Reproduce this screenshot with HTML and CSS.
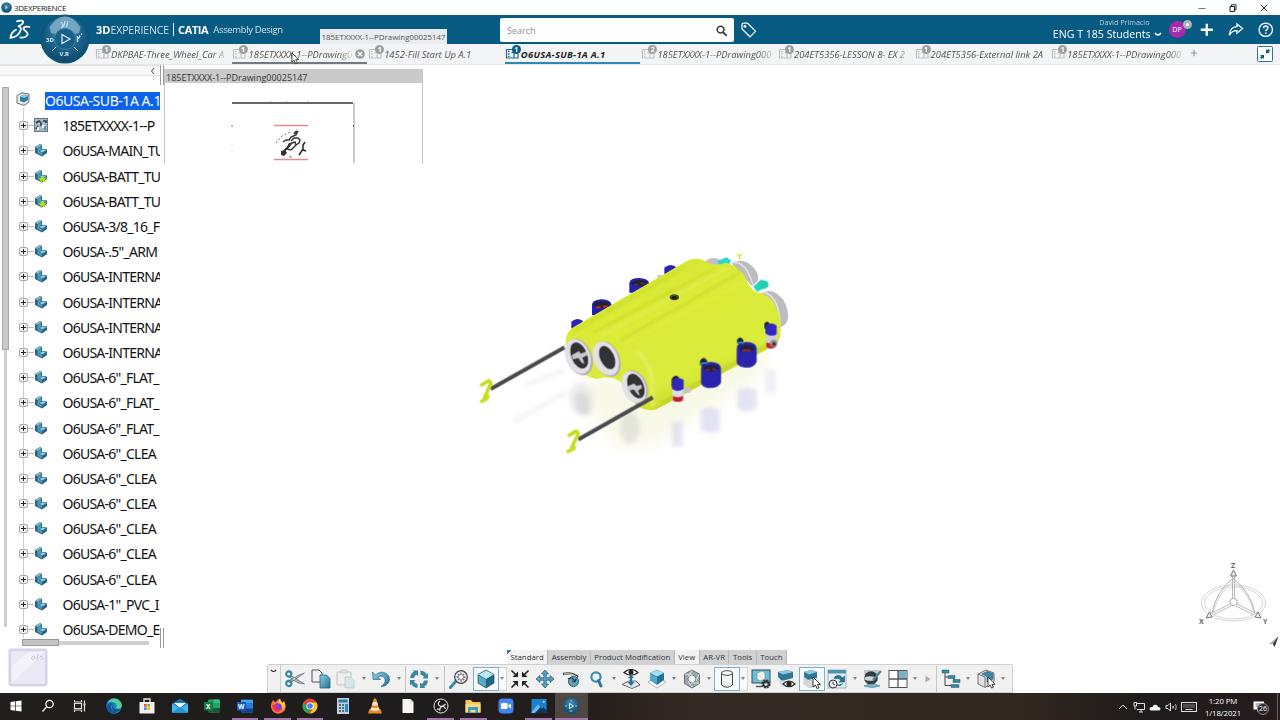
FILE: index.html
```
<!DOCTYPE html>
<html lang="en">

<head>
    <meta charset="UTF-8">
    <meta name="viewport" content="width=device-width, initial-scale=1.0">
    <title>3DEXPERIENCE</title>
    <link rel="stylesheet" href="styles.css">
</head>

<body>
    <!-- shared icons -->
    <svg class="defs" width="0" height="0">
        <defs>
            <linearGradient id="blueGrad" x1="0" y1="0" x2="1" y2="1">
                <stop offset="0" stop-color="#8fd0e6" />
                <stop offset="1" stop-color="#246f92" />
            </linearGradient>
            <linearGradient id="shell" x1="0" y1="0" x2="0.6" y2="1">
                <stop offset="0" stop-color="#d3e42e" />
                <stop offset="0.45" stop-color="#dbeb38" />
                <stop offset="0.8" stop-color="#dbeb3a" />
                <stop offset="1" stop-color="#c3d42a" />
            </linearGradient>
            <radialGradient id="ball" cx="0.5" cy="0.35" r="0.7">
                <stop offset="0" stop-color="#4a8fb4" />
                <stop offset="0.6" stop-color="#1a5f87" />
                <stop offset="1" stop-color="#0c4566" />
            </radialGradient>
            <filter id="soft" x="-30%" y="-30%" width="160%" height="160%">
                <feGaussianBlur stdDeviation="7" />
            </filter>
            <filter id="softer" x="-30%" y="-30%" width="160%" height="160%">
                <feGaussianBlur stdDeviation="22" />
            </filter>
            <filter id="shine" x="-30%" y="-30%" width="160%" height="160%">
                <feGaussianBlur stdDeviation="3" />
            </filter>
        </defs>
        <symbol id="part" viewBox="0 0 14 14">
            <path d="M1 4 L6 1 L8 2 L8 6 L13 6.5 L13 10 L8 13.5 L1 10Z" fill="#28647f" />
            <path d="M1.5 4.3 L6 1.5 L7.5 2.3 L3.3 5Z" fill="#8cc8de" />
            <path d="M3.5 5.4 L7.2 3 L7.2 6.5 L4.8 8.2 L8 9.9 L8 12.6 L3.5 10Z" fill="#4d9cbb" />
            <path d="M5.6 8 L8.4 6.6 L12 7.3 L8.4 9.4Z" fill="#8cd0e6" />
        </symbol>
        <symbol id="star" viewBox="0 0 14 14">
            <path d="M8 6 L9 9 L13 8.5 L10.5 11 L12 13.5 L8.7 12 L6 14 L6.7 11.2 L4 9.5 L7.3 9Z" fill="#b8e010" />
        </symbol>
        <symbol id="cube" viewBox="0 0 20 20">
            <path d="M2 5.5 L10 1 L18 5.5 V14 L10 19 L2 14Z" fill="#226787" stroke="#1c4d63" stroke-width=".7" />
            <path d="M2.4 5.6 L10 1.4 L17.6 5.6 L10 10Z" fill="#bce8f5" />
            <path d="M2.4 6.2 L9.8 10.5 V18.2 L2.4 13.8Z" fill="#5ba8c5" />
        </symbol>
        <symbol id="tabicon" viewBox="0 0 18 14">
            <path d="M1.500 3.500 H9 V12 H1.500Z M8 12 H13 V8" fill="none" stroke="currentColor" stroke-width="1.2" />
            <path d="M3 5.500 H4.500 M3 8 H4.500 M3 10.300 H4.500 M6.500 6.500 H8" stroke="currentColor" stroke-width="1.3" />
        </symbol>
        <symbol id="cursor" viewBox="0 0 10 14">
            <path d="M1 0.8 V11 L3.4 8.9 L5.2 13 L7 12.2 L5.3 8.2 H8.6Z" fill="#fff" stroke="#222" stroke-width=".9" />
        </symbol>
    </svg>

    <div class="titlebar">
        <svg width="11" height="11" viewBox="0 0 11 11"><circle cx="5.5" cy="5.5" r="5.3" fill="url(#ball)" /><path d="M4.3 3.5 L7 5.5 L4.3 7.5Z" fill="#9cc8de" /></svg>
        <span class="app-name">3DEXPERIENCE</span>
        <div class="window-buttons">
            <svg viewBox="0 0 10 10"><path d="M1.5 5.5 H8.5" stroke="#777" /></svg>
            <svg viewBox="0 0 10 10"><path d="M2 3.5 H6.5 V8.5 H2Z M3.5 3.5 V1.8 H8 V6.8 H6.5" fill="none" stroke="#222" /></svg>
            <svg viewBox="0 0 10 10"><path d="M2 2 L8 8 M8 2 L2 8" stroke="#222" /></svg>
        </div>
    </div>

    <header class="topbar">
        <svg class="ds-logo" viewBox="0 0 22 22" fill="none" stroke="#fff" stroke-width="1.8" stroke-linecap="round">
            <path d="M8 2.300 C11 1.200 15 1.200 14 3.800 C13.300 5.600 11 6.700 9 7.300 C12.500 7.600 12.500 10 10.800 13.200 C8.800 16.800 4.500 18.600 1.500 18.800 C1.800 15.500 3.500 12.500 7 10.800" />
            <path d="M20.300 8 C17.500 7.200 14.300 8 14.500 9.800 C14.800 11.600 19 12.600 18.700 15.200 C18.400 17.800 14.500 19 11.300 18.400" />
        </svg>
        <svg class="compass" viewBox="0 0 52 52">
            <circle cx="26" cy="26" r="24.500" fill="#0a5578" />
            <circle cx="26" cy="26" r="22.500" fill="url(#ball)" />
            <path d="M10.500 14 Q18 3 26 3.500 Q34 3 41.500 14 L40 20 L35 21 A10.500 10.500 0 0 0 17 21 L12 20Z" fill="#8ab7d0" opacity=".75" />
            <circle cx="26" cy="26" r="10.500" fill="#155f88" stroke="#3b7fa2" />
            <path d="M23 21.500 L31 26 L23 30.500Z" fill="none" stroke="#e6f2f8" stroke-width="1.200" />
            <path d="M22 9 L24 12 L22.500 15 M26 8 L24.500 14 M29 8 L27.500 14 M13 38 L17 34 M39 38 L35 34" stroke="#d9e9f1" fill="none" />
            <path d="M38.500 23 V29 M41 22.500 L39.500 26 M42.500 20.500 V22" stroke="#d9e9f1" fill="none" stroke-width="1.300" />
            <text x="7" y="28.500" class="compass-text">3D</text>
            <text x="20.500" y="42.500" class="compass-text">V.R</text>
        </svg>
        <div class="brand"><b>3D</b><span class="exp">EXPERIENCE</span><i></i><b class="catia">CATIA</b><span class="app">Assembly Design</span></div>
        <div class="search">
            <span>Search</span>
            <svg viewBox="0 0 12 12"><circle cx="5" cy="5" r="3.7" fill="none" stroke="#333c44" stroke-width="1.7" /><path d="M7.8 7.8 L11 11" stroke="#333c44" stroke-width="2" stroke-linecap="round" /></svg>
        </div>
        <svg class="tag" viewBox="0 0 16 16" fill="none" stroke="#fff" stroke-width="1.2"><path d="M1 2.5 Q1 1.2 2.3 1.2 H6.5 L14.5 9.3 L9 14.8 L1 7Z" /><circle cx="4" cy="4.2" r=".9" /></svg>
        <div class="user">
            <span class="user-name">David Primacio</span>
            <span class="space">ENG T 185 Students <svg width="8" height="5" viewBox="0 0 8 5"><path d="M1 1 Q2.5 3 4 3 Q5.5 3 7 1" fill="none" stroke="#fff" stroke-width="1.4" /></svg></span>
        </div>
        <div class="avatar">DP<em></em></div>
        <div class="top-actions">
            <svg viewBox="0 0 16 16"><path d="M8 1.8 V14.2 M1.8 8 H14.2" stroke="#fff" stroke-width="2.4" /></svg>
            <svg viewBox="0 0 16 16"><path d="M9.3 2 L15 6.8 L9.3 11.5 V8.8 C5.5 8.7 3.4 10 1.3 13.6 C1.8 8.3 4.5 5 9.3 4.8Z" fill="none" stroke="#fff" stroke-width="1.3" /></svg>
            <svg viewBox="0 0 16 16"><circle cx="8" cy="8" r="6.9" fill="none" stroke="#fff" stroke-width="1.3" /><path d="M5.8 6.3 C5.9 3.4 10.2 3.5 10.2 6 C10.2 7.6 8 7.7 8 9.5 M8 10.9 V12.3" fill="none" stroke="#fff" stroke-width="1.5" /></svg>
        </div>
        <div class="tooltip">185ETXXXX-1--PDrawing00025147</div>
    </header>

    <nav class="tabs">
        <div class="tab"><svg class="tab-icon"><use href="#tabicon" /></svg><em>1</em><span class="fade">DKPBAE-Three_Wheel_Car A</span></div>
        <div class="tab hover"><svg class="tab-icon"><use href="#tabicon" /></svg><em>1</em><span class="fade short">185ETXXXX-1--PDrawing0</span><svg class="close" viewBox="0 0 10 10"><circle cx="5" cy="5" r="4.8" fill="#9a9fa2" /><path d="M3 3 L7 7 M7 3 L3 7" stroke="#fff" stroke-width="1.3" /></svg></div>
        <div class="tab"><svg class="tab-icon"><use href="#tabicon" /></svg><em>1</em><span>1452-Fill Start Up A.1</span></div>
        <div class="tab active"><svg class="tab-icon"><use href="#tabicon" /></svg><em>1</em><span>O6USA-SUB-1A A.1</span></div>
        <div class="tab"><svg class="tab-icon"><use href="#tabicon" /></svg><em>2</em><span class="fade">185ETXXXX-1--PDrawing000</span></div>
        <div class="tab"><svg class="tab-icon"><use href="#tabicon" /></svg><em>1</em><span class="fade">204ET5356-LESSON 8- EX 2</span></div>
        <div class="tab"><svg class="tab-icon"><use href="#tabicon" /></svg><em>1</em><span>204ET5356-External link 2A</span></div>
        <div class="tab"><svg class="tab-icon"><use href="#tabicon" /></svg><em>1</em><span class="fade">185ETXXXX-1--PDrawing000</span></div>
        <svg class="add" viewBox="0 0 8 8"><path d="M4 .8 V7.2 M.8 4 H7.2" stroke="#9a9a9a" stroke-width="1.2" /></svg>
        <svg class="collapse" viewBox="0 0 16 16"><rect x=".5" y=".5" width="15" height="15" rx="1" fill="#fff" stroke="#2a7399" /><path d="M9 3 V7 H13 L11.7 5.7 L13 4.3 L11.7 3 L10.3 4.3Z M7 13 V9 H3 L4.3 10.3 L3 11.7 L4.3 13 L5.7 11.7Z" fill="#0b5a80" /></svg>
        <svg class="mouse"><use href="#cursor" /></svg>
    </nav>

    <main class="workspace">
        <aside class="side">
            <div class="side-head"><svg width="5" height="8" viewBox="0 0 5 8"><path d="M4 1 L1.5 4 L4 7" fill="none" stroke="#444" /></svg></div>
            <div class="tree-wrap">
                <div class="vscroll"><i></i></div>
                <ul class="tree">
                    <li class="root"><svg class="root-icon" viewBox="0 0 14 14"><path d="M1 3.5 L6 .8 L13 2 V10 L8 13.5 L1 11Z" fill="#e5eaec" stroke="#667078" /><path d="M4 4.5 L8 2.5 L12 3.7 V8 L8 10.5 L4 9Z" fill="#2d7d9f" /><path d="M4 4.5 L8 2.8 L12 3.9 L8.2 5.8Z" fill="#8cd0e6" /></svg><span>O6USA-SUB-1A A.1</span></li>
                    <li><i></i><svg viewBox="0 0 14 14"><rect x=".5" y=".5" width="13" height="13" fill="#a9b9c0" stroke="#647883" /><path d="M2 5 L5 3 L7 5 V8 M9 3 H12 V5 M2 11 L4 8" fill="none" stroke="#24404e" stroke-width="1.600" /><path d="M3 9 H5 V12 H3Z M8 7 H11 V10 H8Z M5 5 H6 V6 H5Z" fill="#f4f8fa" /><path d="M11 8 V12" stroke="#2f7f9f" stroke-width="1.500" /></svg><span>185ETXXXX-1--P</span></li>
                    <li><i></i><svg><use href="#part" /></svg><span>O6USA-MAIN_TU</span></li>
                    <li><i></i><svg><use href="#part" /><use href="#star" /></svg><span>O6USA-BATT_TU</span></li>
                    <li><i></i><svg><use href="#part" /><use href="#star" /></svg><span>O6USA-BATT_TU</span></li>
                    <li><i></i><svg><use href="#part" /></svg><span>O6USA-3/8_16_F</span></li>
                    <li><i></i><svg><use href="#part" /></svg><span>O6USA-.5"_ARM</span></li>
                    <li><i></i><svg><use href="#part" /></svg><span>O6USA-INTERNA</span></li>
                    <li><i></i><svg><use href="#part" /></svg><span>O6USA-INTERNA</span></li>
                    <li><i></i><svg><use href="#part" /></svg><span>O6USA-INTERNA</span></li>
                    <li><i></i><svg><use href="#part" /></svg><span>O6USA-INTERNA</span></li>
                    <li><i></i><svg><use href="#part" /></svg><span>O6USA-6"_FLAT_</span></li>
                    <li><i></i><svg><use href="#part" /></svg><span>O6USA-6"_FLAT_</span></li>
                    <li><i></i><svg><use href="#part" /></svg><span>O6USA-6"_FLAT_</span></li>
                    <li><i></i><svg><use href="#part" /></svg><span>O6USA-6"_CLEA</span></li>
                    <li><i></i><svg><use href="#part" /></svg><span>O6USA-6"_CLEA</span></li>
                    <li><i></i><svg><use href="#part" /></svg><span>O6USA-6"_CLEA</span></li>
                    <li><i></i><svg><use href="#part" /></svg><span>O6USA-6"_CLEA</span></li>
                    <li><i></i><svg><use href="#part" /></svg><span>O6USA-6"_CLEA</span></li>
                    <li><i></i><svg><use href="#part" /></svg><span>O6USA-6"_CLEA</span></li>
                    <li><i></i><svg><use href="#part" /></svg><span>O6USA-1"_PVC_I</span></li>
                    <li><i></i><svg><use href="#part" /></svg><span>O6USA-DEMO_E</span></li>
                </ul>
            </div>
            <div class="hscroll"><i></i></div>
            <b class="grip top"></b>
            <b class="grip bottom"></b>
            <svg class="stamp" viewBox="0 0 40 39"><rect x=".5" y=".5" width="39" height="38" rx="3" fill="#d6d2ea" /><rect x="3" y="3" width="34" height="33" rx="1" fill="#eae8f5" /><path d="M4 35 L4 18 L20 4 H36Z" fill="#f3f2fa" /><path d="M23 11 Q26 5 27 10 Q24 13 23 10 M30 6 L29 12 M32 8 Q36 9 33 12" fill="none" stroke="#c5c0dd" /></svg>
        </aside>

        <section class="canvas">
            <svg class="model" viewBox="0 0 990 690">
                <!-- floor reflections -->
                <path d="M320 420 L900 330 L880 400 L560 610 L440 620 Z" fill="#eceec0" opacity=".38" filter="url(#softer)" />
                <g filter="url(#soft)" opacity=".3">
                    <ellipse cx="335" cy="480" rx="38" ry="52" fill="#c9c9cf" transform="rotate(-15 335 480)" />
                    <ellipse cx="337" cy="490" rx="22" ry="36" fill="#8d8d94" transform="rotate(-15 337 490)" />
                    <ellipse cx="480" cy="565" rx="30" ry="48" fill="#bbbbc2" />
                    <path d="M692 510 Q722 495 750 510 V570 Q722 590 692 570Z" fill="#a5a5e0" />
                    <path d="M802 450 Q830 435 860 450 V505 Q830 525 802 505Z" fill="#a5a5e0" />
                    <rect x="606" y="545" width="32" height="75" fill="#b4b0da" />
                    <rect x="886" y="390" width="32" height="70" fill="#d0cde8" />
                    <path d="M170 435 L285 390 M130 545 L285 460" stroke="#c6c6cc" stroke-width="9" />
                </g>
                <!-- ports behind the shell -->
                <g>
                    <ellipse cx="730" cy="66" rx="22" ry="12" fill="#bfbfc5" />
                    <path d="M742 62 L770 52 L784 62 L775 75 L748 77Z" fill="#2dd8cc" />
                    <path d="M802 41 L808 49 L816 42 M809 49 V59" stroke="#d3e52d" stroke-width="4" fill="none" />
                    <path d="M785 70 Q820 50 850 82 Q870 105 862 124 L845 138Z" fill="#bdbdc1" />
                    <path d="M788 68 Q827 62 848 132" fill="none" stroke="#e3e3e5" stroke-width="4" />
                    <path d="M868 165 Q905 135 942 182 Q966 232 943 256 L920 268Z" fill="#bdbdc1" />
                    <path d="M876 156 Q928 163 930 258" fill="none" stroke="#e3e3e5" stroke-width="5" />
                    <path d="M562 105 H585 V88 H600 V112 L562 128Z" fill="#c9c9cc" />
                    <path d="M583 83 Q600 68 617 80 V105 H583Z" fill="#2a23b8" />
                    <path d="M304 245 Q320 230 338 242 V265 H304Z" fill="#2a23b8" />
                    <path d="M478 129 Q480 114 507 114 Q535 115 537 129 V158 H478Z" fill="#2420b0" />
                    <ellipse cx="508" cy="129" rx="23" ry="9" fill="#232133" />
                    <path d="M492 134 H504 M512 130 H524" stroke="#6b2a38" stroke-width="5" fill="none" />
                    <path d="M366 193 Q368 179 395 178 Q422 179 424 193 V225 H366Z" fill="#2420b0" />
                    <ellipse cx="395" cy="194" rx="23" ry="10" fill="#232133" />
                    <path d="M379 202 H392 M398 200 H414" stroke="#a53024" stroke-width="7" fill="none" />
                </g>
                <!-- shell -->
                <path d="M287 300 Q290 275 310 262 L650 63 Q678 50 705 62 L718 70 Q748 78 765 68 Q790 72 803 87 Q822 98 830 123 Q842 145 856 156 Q890 159 910 187 Q932 225 932 260 Q935 305 912 317 L560 508 Q530 517 500 496 L455 430 Q430 402 380 417 Q350 412 320 388 Q284 350 287 300Z" fill="url(#shell)" />
                <g filter="url(#shine)" fill="none">
                    <path d="M370 278 L735 84 M453 300 L817 94" stroke="#bccd25" stroke-width="5" opacity=".6" />
                    <path d="M390 290 L770 85" stroke="#e5f259" stroke-width="9" opacity=".6" />
                    <path d="M466 310 L830 120" stroke="#e7f35a" stroke-width="5" opacity=".5" />
                    <path d="M500 330 Q550 386 547 440 L548 500" stroke="#e9f475" stroke-width="14" opacity=".5" />
                    <path d="M310 275 L650 78" stroke="#c9da2a" stroke-width="10" opacity=".6" />
                    <path d="M575 490 L905 308" stroke="#b8c928" stroke-width="10" opacity=".6" />
                </g>
                <ellipse cx="613" cy="172" rx="14" ry="9" fill="#4c5020" />
                <ellipse cx="613" cy="173" rx="9" ry="5" fill="#1e2118" />
                <!-- front tubes -->
                <g transform="rotate(-22 327 350)"><ellipse cx="327" cy="351" rx="38" ry="57" fill="#b0b0b4" /><ellipse cx="324" cy="348" rx="36" ry="54" fill="#e2e2e6" /><ellipse cx="329" cy="347" rx="24" ry="41" fill="#303234" /></g>
                <path d="M305 345 L327 333 L332 341 L350 334 L354 345 L337 353 L344 372 L333 366 L326 354 L308 358Z" fill="#c8c8ca" />
                <g transform="rotate(-24 409 357)"><ellipse cx="411" cy="358" rx="37" ry="56" fill="#b0b0b4" /><ellipse cx="408" cy="355" rx="36" ry="53" fill="#e2e2e6" /><ellipse cx="413" cy="354" rx="21" ry="37" fill="#303234" /></g>
                <g transform="rotate(-24 493 440)"><ellipse cx="495" cy="441" rx="36" ry="52" fill="#b0b0b4" /><ellipse cx="492" cy="440" rx="34" ry="50" fill="#e2e2e6" /><ellipse cx="498" cy="440" rx="23" ry="39" fill="#303234" /></g>
                <path d="M472 439 L492 430 L500 438 L514 434 L516 444 L504 452 L510 468 L501 462 L492 449 L475 452Z" fill="#c8c8ca" />
                <!-- arms -->
                <path d="M62 447 L283 322 M325 598 L548 472" stroke="#46474b" stroke-width="12" />
                <path d="M62 443 L283 318 M325 594 L546 469" stroke="#66676b" stroke-width="2" />
                <path d="M31 437 L56 422 L63 429 L43 474 L58 467 M31 486 L54 474" stroke="#c8dc24" stroke-width="11" fill="none" stroke-linejoin="round" />
                <path d="M294 588 L318 573 L325 580 L305 623 L316 617 M290 636 L316 623" stroke="#c8dc24" stroke-width="11" fill="none" stroke-linejoin="round" />
                <!-- right side thrusters -->
                <path d="M690 376 V362 Q700 346 711 361 V377Z M801 310 V300 Q810 284 820 300 V315Z M883 265 V251 Q890 240 899 250 V268Z M605 440 V417 Q615 400 628 413Z" fill="#20213d" />
                <path d="M693 385 Q693 367 722 366 Q752 367 753 385 V428 Q745 444 722 444 Q699 444 693 430Z" fill="#2a24ac" />
                <ellipse cx="723" cy="385" rx="23" ry="10" fill="#22203d" />
                <path d="M708 390 H720 M728 385 L738 392" stroke="#7a2b42" stroke-width="6" fill="none" />
                <path d="M800 325 Q800 307 829 306 Q859 307 860 325 V365 Q853 383 829 383 Q804 382 800 368Z" fill="#2a24ac" />
                <ellipse cx="830" cy="325" rx="23" ry="10" fill="#22203d" />
                <path d="M817 331 H842" stroke="#8c3036" stroke-width="6" fill="none" />
                <path d="M690 374 Q700 365 711 370 M800 311 Q810 303 820 310" stroke="#34bac5" stroke-width="4" fill="none" />
                <path d="M636 443 L662 443 V458 L636 460Z" fill="#c5c5ca" />
                <path d="M606 437 H641 V475 H608Z" fill="#dedee2" /><path d="M605 422 Q622 406 641 420 V447 Q622 459 606 447Z" fill="#2f28bd" /><path d="M609 468 Q623 476 639 467 V481 Q622 491 609 481Z" fill="#c51d38" />
                <path d="M887 278 H921 V318 H889Z" fill="#ceced4" /><path d="M886 259 Q902 243 920 257 V283 Q903 292 886 280Z" fill="#2f28bd" /><path d="M889 307 Q902 313 918 303 V320 Q903 331 889 321Z" fill="#c51d38" />
                <circle cx="911" cy="309" r="11" fill="#99999c" /><circle cx="912" cy="312" r="6" fill="#3d3b38" />
                <path d="M849 140 L872 119 L894 125 L896 140 L875 148 L862 156Z" fill="#2ad7bd" /><circle cx="881" cy="134" r="13" fill="#22ccb3" />
            </svg>

            <div class="preview">
                <div class="preview-title">185ETXXXX-1--PDrawing00025147</div>
                <svg viewBox="0 0 256 80">
                    <path d="M67 20 H188" stroke="#333" stroke-width="1.3" />
                    <path d="M189 20 V80" stroke="#bbb" stroke-width="1.500" />
                    <path d="M67 42 V44 M188.500 42 V44 M106 18.500 V20 M122 18.500 V20 M143 18.500 V20" stroke="#666" />
                    <path d="M67 55 V72" stroke="#ddd" stroke-dasharray="1 5" />
                    <path d="M109 42.500 H143 M109 76.500 H143" stroke="#e08a98" stroke-width="1.600" />
                    <path d="M111 60 L117 53 L125 49" stroke="#777" stroke-dasharray="2 2" fill="none" />
                    <path d="M116 68 L120 67 L122 70 L119 73 L116 72Z" fill="#333" />
                    <path d="M122 66 L124 61 L130 59 L131 62 L126 67Z M118 59 L121 57 L124 57 L126 54 L131 52 L133 48 M126 58 L129 55 L133 55 L135 57 L134 60 L131 62" fill="none" stroke="#333" stroke-width="1.400" />
                    <path d="M119 68 L126 61 M129 51 L132 48" stroke="#333" stroke-width="2" />
                    <path d="M134 72 L138 66 L138 62 L140 59 M138 67 L141 68" fill="none" stroke="#222" stroke-width="1.500" />
                    <path d="M124 74 H127" stroke="#777" />
                </svg>
            </div>

            <svg class="triad" viewBox="0 0 74 68">
                <g fill="none" stroke="#c9c9c9" stroke-width=".8">
                    <ellipse cx="36.500" cy="42" rx="32" ry="18" /><ellipse cx="36.500" cy="42" rx="29" ry="16" />
                    <path d="M15 52 Q19 31 36 17 Q54 32 58 52" stroke="#999" />
                    <path d="M16.500 51 Q21 32 36.500 20 Q53 34 56.500 51" />
                    <path d="M35.500 38 V13 M37.500 38 V13 M33 43 L15 52 M34 45 L16 54 M40 43 L58 52 M39 45 L57 54" stroke="#aaa" />
                </g>
                <circle cx="36.500" cy="41" r="3.700" fill="#fff" stroke="#aaa" />
                <path d="M36.500 9 L39.500 15 H33.500Z M9 57 L15 56 L12.500 51Z M64 57 L58 56 L61 51Z" fill="#eee" stroke="#777" />
                <text x="34" y="7">Z</text><text x="2" y="63">X</text><text x="66" y="63">Y</text>
            </svg>
            <svg class="pointer" viewBox="0 0 10 12"><path d="M9.500 0 L0 8 L4 8 L5.500 11Z" fill="#aaa" /><path d="M9.500 0 L4 8 L5.500 11Z" fill="#333" /></svg>

            <div class="actionbar">
                <div class="sections">
                    <span class="on first">Standard</span><span>Assembly</span><span>Product Modification</span><span class="on">View</span><span>AR-VR</span><span>Tools</span><span>Touch</span>
                </div>
                <div class="tools">
                    <div class="handle"><svg width="7" height="5" viewBox="0 0 7 5"><path d="M1 1 Q3.500 4 6 1" fill="none" stroke="#333" stroke-width="1.200" /></svg></div>
                    <div class="tool"><svg viewBox="0 0 20 20"><path d="M5 6 L19.500 15 L13 14 L4 8Z M5 14 L19.500 4 L14 6 L3 12Z" fill="#a6b0b5" stroke="#59656c" stroke-width=".6" /><circle cx="3.800" cy="5" r="2.600" fill="none" stroke="#3387a8" stroke-width="2.100" /><circle cx="3.800" cy="14.500" r="2.600" fill="none" stroke="#3387a8" stroke-width="2.100" /></svg></div>
                    <div class="tool"><svg viewBox="0 0 20 20"><path d="M1 1 H8 L11 4 V13 H1Z" fill="#eef1f2" stroke="#444" stroke-width=".9" /><path d="M9 6 H15.500 L19 9.500 V19 H9Z" fill="url(#blueGrad)" stroke="#22627f" stroke-width=".8" /></svg></div>
                    <div class="tool"><svg viewBox="0 0 20 20" opacity=".65"><path d="M1 3 H15 V16 H1Z" fill="#eee" stroke="#aaa" /><rect x="5" y="1" width="6" height="3" fill="#ddd" stroke="#aaa" stroke-width=".7" /><path d="M9 8 H15 L18 11 V19 H9Z" fill="#cde0e7" stroke="#9ab4be" stroke-width=".8" /></svg></div>
                    <i class="caret"></i>
                    <div class="tool"><svg viewBox="0 0 20 20"><path d="M1.500 3 L2 10.500 L9.500 10.500 L6.800 8.300 C11 5.500 15 8.500 14 12.500 C13.500 14.500 12 16 10 17.500 C15 17.500 18.500 14 18.500 10 C18.500 4 10 .5 4.500 6Z" fill="url(#blueGrad)" stroke="#2b6d88" stroke-width=".7" /></svg></div>
                    <i class="caret"></i>
                    <i class="sep"></i>
                    <div class="tool"><svg viewBox="0 0 20 20" fill="#3b86a3"><path d="M1 9 Q1.500 4.500 5 2.500 L3.500 1.500 H9 V7 L7.500 5.500 Q5.500 6.500 5 9Z M11.500 1.500 Q16 2 17.700 5.500 L19 4 V9.500 H13.500 L15 8 Q14 6 11.500 5.500Z M19 11.500 Q18.500 16 15 17.700 L16.500 19 H11 V13.500 L12.500 15 Q14.500 14 15 11.500Z M8.500 19 Q4 18.500 2.300 15 L1 16.500 V11 H6.500 L5 12.500 Q6 14.500 8.500 15Z" /></svg></div>
                    <i class="caret"></i>
                    <i class="sep wide"></i>
                    <div class="tool"><svg viewBox="0 0 20 20"><path d="M1.500 18.500 L7 12" stroke="#3e87a3" stroke-width="3" stroke-linecap="round" /><circle cx="12" cy="8" r="6.300" fill="#e8eaeb" stroke="#444" stroke-width="1.200" /><path d="M12 3.500 V12.500 M7.500 8 H16.500 M9 5 L15 11 M15 5 L9 11" stroke="#777" stroke-width="1.400" /><circle cx="12" cy="8" r="2" fill="#fff" /></svg></div>
                    <div class="tool boxed view-cube"><svg><use href="#cube" /></svg></div><i class="caret boxed-caret"></i>
                    <div class="tool"><svg viewBox="0 0 20 20" stroke="#222" fill="#222" stroke-width="1.600"><path d="M1.500 1.500 L6 6 M18.500 1.500 L14 6 M1.500 18.500 L6 14 M18.500 18.500 L14 14" /><path d="M8 2.500 V8 H2.500Z M12 2.500 V8 H17.500Z M8 17.500 V12 H2.500Z M12 17.500 V12 H17.500Z" stroke="none" /></svg></div>
                    <div class="tool"><svg viewBox="0 0 20 20"><path d="M10 1 L13.500 5 H11.200 V8.800 H15 V6.500 L19 10 L15 13.500 V11.200 H11.200 V15 H13.500 L10 19 L6.500 15 H8.800 V11.200 H5 V13.500 L1 10 L5 6.500 V8.800 H8.800 V5 H6.500Z" fill="#55a3c0" stroke="#23627e" stroke-width=".8" /></svg></div>
                    <div class="tool"><svg viewBox="0 0 20 20"><path d="M2 5 Q11 3 17 8" fill="none" stroke="#444" stroke-width="2.600" /><path d="M3 5 Q11 4 16 8" fill="none" stroke="#eee" /><circle cx="12.500" cy="12.500" r="5" fill="#5aa4bd" stroke="#205f79" /><path d="M7 10 Q12 7 14 13 M14 13 L11 12 M14 13 L15 10" fill="none" stroke="#234" stroke-width="1.200" /></svg></div>
                    <div class="tool"><svg viewBox="0 0 20 20"><circle cx="10" cy="8" r="4.600" fill="#eaf3f7" stroke="#3f8dac" stroke-width="2.300" /><path d="M12.500 11.500 L15 17" stroke="#2e7592" stroke-width="3" stroke-linecap="round" /></svg></div>
                    <i class="caret"></i>
                    <div class="tool"><svg viewBox="0 0 20 20"><path d="M1 15.500 L8 12 H15 L19 16 L11 19.500Z" fill="#dfe5e8" stroke="#444" stroke-width=".8" /><path d="M10 7 V15" stroke="#2a7392" stroke-width="2.400" /><path d="M6.500 13 H13.500 L10 17Z M7 9 L10 6 L13 9Z" fill="#2a7392" /><path d="M3 3.500 Q10 -2.500 17 3.500 Q10 9 3 3.500Z" fill="#fff" stroke="#222" stroke-width="1.200" /><circle cx="10" cy="3.300" r="2.500" fill="#222" /></svg></div>
                    <div class="tool"><svg viewBox="0 0 20 20"><path d="M1 13 L10 8 L19 13 L10 19Z" fill="#fff" stroke="#999" stroke-width=".7" /><path d="M3 4 L10 .8 L17 4 V11 L10 16 L3 11Z" fill="#22708f" /><path d="M3 4 L10 1 L17 4 L10 7.500Z" fill="#a4dff2" /><path d="M3 4.500 L10 8 V16 L3 11Z" fill="#52a9c8" /></svg></div>
                    <i class="caret"></i>
                    <div class="tool"><svg viewBox="0 0 20 20"><path d="M2.500 5 L10 1 L17.500 5 V14.500 L10 19 L2.500 14.500Z" fill="#9aa6ae" stroke="#596168" stroke-width=".8" /><circle cx="10" cy="10" r="4" fill="#f4f5f6" stroke="#6f7980" /><path d="M3 5 L11 6 M17 5 L14 12 M10 18 L6 12 M10 1.500 L6 8 M17 14 L9 14" stroke="#dce1e4" /></svg></div>
                    <i class="caret"></i>
                    <div class="tool boxed"><svg viewBox="0 0 20 20"><path d="M4.500 4 V16 Q10 20.500 15.500 16 V4" fill="#f3f3f3" stroke="#333" stroke-width=".9" /><ellipse cx="10" cy="4" rx="5.500" ry="2.300" fill="#fff" stroke="#333" stroke-width=".9" /></svg></div><i class="caret boxed-caret"></i>
                    <div class="tool screen"><svg viewBox="0 0 20 20"><rect x="1" y="1" width="18" height="13" fill="#62c0dd" stroke="#3a4a52" /><path d="M6 4 L11 2 L14 4 V10 L9 12 L6 10Z" fill="#eef0ea" stroke="#888" stroke-width=".6" /><path d="M5 17.500 H11" stroke="#555" stroke-width="1.500" /><circle cx="15" cy="15" r="3.500" fill="none" stroke="#333" stroke-width="2.200" stroke-dasharray="2 .7" /><circle cx="15" cy="15" r="2.500" fill="none" stroke="#333" stroke-width="1.500" /></svg></div>
                    <div class="tool"><svg viewBox="0 0 20 20"><path d="M2 3 L12 1 L17 3 V9 L6 12 L2 8Z" fill="#2e7896" /><path d="M2 3 L12 1 L17 3 L7 5.500Z" fill="#8ccbe0" /><path d="M2 11 L5 17 L9 18 V12Z" fill="#d8dde0" /><path d="M7 15 Q13 9 19 15 Q13 20.500 7 15Z" fill="#fff" stroke="#222" stroke-width="1.100" /><circle cx="13" cy="14.800" r="2.600" fill="#222" /></svg></div>
                    <div class="tool boxed"><svg viewBox="0 0 20 20"><path d="M2 3 L9 1 L15 3 V9 L6 11 L2 8Z" fill="#2e7896" /><path d="M2 3 L9 1 L15 3 L7 5.500Z" fill="#8ccbe0" /><path d="M2 9 L6 12 L14 10 V17 L8 19 L2 15Z" fill="#d6dadc" stroke="#aaa" stroke-width=".5" /><path d="M11 8 V18 L13.500 16 L15 19.500 L17 18.700 L15.500 15.400 H18.500Z" fill="#fff" stroke="#333" /></svg></div>
                    <div class="tool"><svg viewBox="0 0 20 20"><rect x="1" y="1" width="18" height="18" fill="#e4eef3" stroke="#9fb9c6" /><rect x="1" y="1" width="18" height="3.500" fill="#4e93b0" /><path d="M7 8.500 Q12 4 15.500 9 L17.500 7 V13 H12 L14 11 Q11 8 8 10Z M10 16 Q13 18 16 14.500" fill="#2b718f" stroke="#2b718f" stroke-width=".8" /><circle cx="6" cy="15" r="4" fill="#fff" stroke="#333" /><path d="M6 12.500 V15 L8 16" fill="none" stroke="#333" /></svg></div>
                    <i class="caret"></i>
                    <div class="tool"><svg viewBox="0 0 20 20"><path d="M2 1 H17 V6 H2Z" fill="#c2c8cb" /><circle cx="9" cy="9" r="6.800" fill="#373c40" /><ellipse cx="8" cy="9.500" rx="5.500" ry="2.300" fill="#cfd5d8" /><path d="M19 2 L11 11" stroke="#3e87a3" stroke-width="2.200" /><path d="M2 17 Q10 13 18 17 Q10 20 2 17Z" fill="#79b8ce" stroke="#3b7d97" stroke-width=".6" /></svg></div>
                    <div class="tool"><svg viewBox="0 0 20 20"><rect x="1" y="1.500" width="18" height="17" fill="#fff" stroke="#555" /><rect x="10" y="2" width="8.500" height="8" fill="#7cb2c6" /><path d="M10 1.500 V18.500 M1 10 H19" stroke="#555" stroke-width="1.300" /></svg></div>
                    <i class="caret"></i>
                    <svg class="play" viewBox="0 0 6 8"><path d="M.5 .5 L5.500 4 L.5 7.500Z" fill="#b0b0b0" /></svg>
                    <i class="sep"></i>
                    <div class="tool"><svg viewBox="0 0 20 20"><path d="M4 4 V16.500 H11 M4 8 H8 M13 9 V12 H14" fill="none" stroke="#444" /><path d="M1 1 H8 V4 H1Z M7 6.500 H14 V9.500 H7Z M12 10.500 H19 V13.500 H12Z M10 15.500 H18 V18.500 H10Z" fill="#3a86a5" stroke="#245e77" stroke-width=".5" /></svg></div>
                    <i class="caret"></i>
                    <div class="tool"><svg viewBox="0 0 20 20"><path d="M2 5 L10 1 L18 4 V13 L9 18.500 L2 15Z" fill="#e0e2e3" stroke="#555" stroke-width=".8" /><path d="M2 5 L9 8 V18" fill="none" stroke="#777" /><path d="M6 5 L11 2.500 L17 4.500 V10 L11 13 V7.500Z" fill="#3b8aa8" stroke="#225e78" stroke-width=".6" /><path d="M12 8 V18 L14.300 16 L15.500 19 L17.300 18.300 L16 15.300 H19Z" fill="#fff" stroke="#333" stroke-width=".9" /></svg></div>
                    <i class="caret"></i>
                </div>
            </div>
        </section>
    </main>

    <footer class="taskbar">
        <div class="sys"><svg viewBox="0 0 16 16" fill="#fff"><path d="M2.500 4 L7.300 3.300 V7.700 H2.500Z M8 3.200 L13.500 2.400 V7.700 H8Z M2.500 8.300 H7.300 V12.700 L2.500 12Z M8 8.300 H13.500 V13.600 L8 12.800Z" /></svg></div>
        <div class="sys"><svg viewBox="0 0 16 16" fill="none" stroke="#fff" stroke-width="1.200"><circle cx="9.500" cy="6" r="3.700" /><path d="M6.800 8.700 L2.500 13.500" /></svg></div>
        <div class="sys"><svg viewBox="0 0 16 16" fill="none" stroke="#ddd" stroke-width="1.200"><path d="M2.500 5.500 H9.500 V10.500 H2.500Z M2.500 2 V4 H9.500 V2 M2.500 14 V12 H9.500 V14 M12.500 2.500 V13.500" /><path d="M11.500 6.500 H13.500" stroke-width="2" /></svg></div>
        <div class="task"><svg viewBox="0 0 16 16"><circle cx="8" cy="8" r="7.700" fill="#1687cf" /><path d="M1 5 Q5 -1 11 1 Q17 4 15.500 9 Q14 11.500 10 10.500 Q12 6 8 4.500 Q4 3 1 5Z" fill="#55cf91" /><path d="M5 7 Q4 14 12 13 Q9 16.500 5 15 Q0 12.500 1 8 Q3 3 8 6Z" fill="#0d589f" /><path d="M8 6.500 Q5.500 9 9 11.500 Q12 12.500 15 10.500 Q12 14 8.500 12.500 Q4.500 9.500 8 6.500Z" fill="#161616" /></svg></div>
        <div class="task"><svg viewBox="0 0 16 16"><path d="M5 4 V1 H11 V4" fill="none" stroke="#eee" stroke-width="1.300" /><path d="M0.500 4 H15.500 V15.500 H.5Z" fill="#f2efef" /><path d="M5 6 H7.700 V8.700 H5Z" fill="#e8542e" /><path d="M8.300 6 H11 V8.700 H8.300Z" fill="#83b52d" /><path d="M5 9.300 H7.700 V12 H5Z" fill="#2a9bd8" /><path d="M8.300 9.300 H11 V12 H8.300Z" fill="#efb921" /></svg></div>
        <div class="task"><svg viewBox="0 0 16 16"><path d="M0 5.500 L8 .8 L16 5.500 V14.500 H0Z" fill="#1873b8" /><path d="M2 5 H14 L8 10Z" fill="#eff8fd" /><path d="M0 5.500 L8 10.500 L16 5.500 V14.500 H0Z" fill="#42b8eb" /><path d="M0 14.500 L8 9 L16 14.500Z" fill="#2196d7" /></svg></div>
        <div class="task"><svg viewBox="0 0 16 16"><rect x="4" y="1.500" width="12" height="13" rx="1" fill="#21a366" /><path d="M10 1.500 H15 L16 5 H10Z" fill="#33c481" /><path d="M4 10 H16 V14 H4Z" fill="#185c37" /><rect x="0" y="4" width="9" height="8.500" fill="#107c41" /><text x="2" y="11" class="office">X</text></svg></div>
        <div class="task run"><svg viewBox="0 0 16 16"><rect x="4" y="1.500" width="12" height="13" rx="1" fill="#2b7cd3" /><path d="M4 2 H16 V5 H4Z" fill="#41a5ee" /><path d="M4 10.500 H16 V14 H4Z" fill="#103f91" /><rect x="0" y="4" width="9" height="8.500" fill="#185abd" /><text x="1" y="11" class="office">W</text></svg></div>
        <div class="task run"><svg viewBox="0 0 16 16"><path d="M3 2 Q4 4 6 4 Q7 1 10 .5 Q10 3 13 5 L14 3 Q18 10 13 14 Q7 18 2.500 13 Q-1 8 3 2Z" fill="#ff7139" /><path d="M10 .5 Q10 3 13 5 L14 3 Q16 9 13 12 Q12 6 8 5Z" fill="#ffd23c" /><circle cx="8" cy="9" r="3.800" fill="#8a3cd6" /><path d="M2 7 Q6 6 8 8 Q6 9 5 10 Q8 13 11 10 Q11 14 7 14 Q3 13 2 7Z" fill="#f23454" /></svg></div>
        <div class="task run"><svg viewBox="0 0 16 16"><circle cx="8" cy="8" r="7.500" fill="#dc4437" /><path d="M1.500 4.300 L6 10 L8 15.500 A7.500 7.500 0 0 1 1.500 4.300Z" fill="#2ba24c" /><path d="M8 4.500 H14.600 A7.500 7.500 0 0 1 8 15.500 L11 10Z" fill="#f9c522" /><circle cx="8" cy="8" r="3.600" fill="#fff" /><circle cx="8" cy="8" r="2.800" fill="#4285f4" /></svg></div>
        <div class="task"><svg viewBox="0 0 16 16"><rect x="2" y="0" width="12" height="16" fill="#c1d0da" /><rect x="3.500" y="1.500" width="9" height="3" fill="#247cb2" /><path d="M4 6 H6 V8 H4Z M7 6 H9 V8 H7Z M4 9 H6 V11 H4Z M7 9 H9 V11 H7Z M4 12 H6 V14 H4Z M7 12 H9 V14 H7Z" fill="#536a78" /><path d="M10 6 H13 V14 H10Z" fill="#258bc6" /></svg></div>
        <div class="task"><svg viewBox="0 0 16 16"><path d="M2.500 11 H13.500 L15 15.500 H1Z" fill="#ee8b1c" /><path d="M7 .5 H9 L13 13 Q8 15 3 13Z" fill="#f48c16" /><path d="M6 4 H10 L11 7 Q8 8 5 7Z M4.300 9.500 Q8 11 11.700 9.500 L12.300 12 Q8 13.300 3.700 12Z" fill="#f3ece5" /></svg></div>
        <div class="task"><svg viewBox="0 0 16 16"><path d="M2.500 1 H10.500 L13.500 4 V15 H2.500Z" fill="#f6f6f3" /><path d="M10.500 1 V4 H13.500Z" fill="#c8c8c8" /></svg></div>
        <div class="task run"><svg viewBox="0 0 16 16"><circle cx="8" cy="8" r="7" fill="#1b1a1d" stroke="#e1e1e1" /><path d="M7 3 Q3.500 6 7 8 Q10 9 12.500 6 M12.500 11 Q11 7 8 9 Q6 11 7 13 M4 11 Q8 12 8 8" fill="none" stroke="#ddd" stroke-width="1.200" /></svg></div>
        <div class="task run"><svg viewBox="0 0 16 16"><path d="M.5 2 H6 L7.500 4 H15.500 V14.500 H.5Z" fill="#f5c74e" /><path d="M.5 6 H15.500 V14.500 H.5Z" fill="#fbdc75" /><path d="M3 15 V9 H13 V15 H10.500 V12 H5.500 V15Z" fill="#3f9ad2" /></svg></div>
        <div class="task"><svg viewBox="0 0 16 16"><rect x=".5" y=".5" width="15" height="15" rx="4" fill="#4286f1" /><rect x="3" y="5" width="6.500" height="6" rx="1.300" fill="#fff" /><path d="M10.300 7.300 L13 5.500 V10.500 L10.300 8.700Z" fill="#fff" /></svg></div>
        <div class="task run"><svg viewBox="0 0 16 16"><rect x=".5" y="1" width="15" height="14" fill="#1683cf" /><path d="M.5 15 L7 6 L11 11 L12.500 9 L15.500 13 V15Z" fill="#0f355f" /><path d="M.5 14 L7 6 L9.500 9 L4 15 H.5Z" fill="#6ab7e9" /><rect x="12" y="3" width="1.500" height="1.500" fill="#fff" /></svg></div>
        <div class="task run current"><svg viewBox="0 0 16 16"><circle cx="8" cy="8" r="7.800" fill="url(#ball)" /><path d="M6.500 5.500 L10.500 8 L6.500 10.500Z" fill="none" stroke="#d2e7f1" /><path d="M2 8 H4 M12 8 H14 M8 2 V3.500 M6.500 13 H9.500" stroke="#9fcbe0" /></svg></div>
        <div class="tray">
            <svg viewBox="0 0 12 12" fill="none" stroke="#ddd"><path d="M2 8 L6 4 L10 8" /></svg>
            <svg viewBox="0 0 12 12" fill="none" stroke="#ddd"><path d="M3 2.500 H11.500 V8.500 H4 M6 11 H10 M8 8.500 V11" /><path d="M1 1.500 H3.500 V5 H1Z M2 5 V8.500" /></svg>
            <svg viewBox="0 0 12 12"><path d="M2.500 9.500 Q0 9 .8 7 Q1.500 5.500 3.500 6 Q4.500 2.700 7.500 4 Q9 4.500 9 6 Q11.700 6 11.500 8 Q11.300 9.500 9.500 9.500Z" fill="#f3f3f3" /></svg>
            <svg viewBox="0 0 12 12" fill="none" stroke="#ddd"><path d="M1 4.500 H3 L5.500 2 V10 L3 7.500 H1Z" /><path d="M7.300 4.700 L9 7.500 M9 4.700 L7.300 7.500 M10.500 3 Q12 6 10.500 9" stroke-width=".8" /></svg>
            <svg class="keyboard" viewBox="0 0 16 12"><rect x=".5" y="1.500" width="15" height="9" fill="none" stroke="#ddd" /><path d="M2.500 4 H13.500 M2.500 6 H13.500" stroke="#ddd" stroke-dasharray="1 1" /><path d="M4.500 8.500 H11.500" stroke="#ddd" /></svg>
            <div class="clock"><span>1:20 PM</span><span>1/18/2021</span></div>
            <div class="notice"><svg viewBox="0 0 12 12"><path d="M.5 .5 H11 V8.500 H6 L4 11 V8.500 H.5Z" fill="#fff" /><path d="M2.500 3 H9 M2.500 5 H9" stroke="#555" stroke-width=".9" /></svg><em>26</em></div>
        </div>
    </footer>
</body>

</html>
```
FILE: styles.css
```
* {
    box-sizing: border-box;
}

body {
    margin: 0;
    width: 1280px;
    height: 720px;
    overflow: hidden;
    display: flex;
    flex-direction: column;
    background: #fff;
    font-family: "Open Sans", "Noto Sans", sans-serif;
    color: #333;
}

em, i {
    font-style: normal;
}

svg {
    flex: none;
    display: block;
}

.defs {
    position: absolute;
}

/* title bar */
.titlebar {
    height: 15px;
    display: flex;
    align-items: center;
    padding-left: 1px;
    gap: 2px;
}

.app-name {
    font-size: 8px;
    letter-spacing: -0.3px;
    color: #222;
}

.window-buttons {
    margin-left: auto;
    display: flex;
    gap: 21px;
    padding-right: 11px;
}

.window-buttons svg {
    width: 10px;
    height: 10px;
}

/* blue bar */
.topbar {
    position: relative;
    height: 29px;
    flex: none;
    display: flex;
    align-items: center;
    background: #075a82;
    color: #fff;
    z-index: 2;
}

.ds-logo {
    width: 22px;
    height: 22px;
    margin-left: 9px;
}

.compass {
    position: absolute;
    left: 39px;
    top: -2px;
    width: 52px;
    height: 52px;
}

.compass-text {
    font: bold 6px "Open Sans", sans-serif;
    fill: #e0edf4;
}

.brand {
    display: flex;
    align-items: center;
    width: 340px;
    margin-left: 65px;
    font-size: 10.5px;
    line-height: 14px;
}

.brand b {
    font-size: 11px;
}

.brand i {
    width: 1px;
    height: 13px;
    margin: 0 4px;
    background: #fff;
}

.brand .catia {
    letter-spacing: -0.4px;
}

.exp,
.app {
    color: #cfe0ea;
}

.exp {
    letter-spacing: -0.1px;
}

.app {
    margin-left: 5px;
    font-size: 9.5px;
    letter-spacing: -0.35px;
}

.search {
    width: 234px;
    height: 24px;
    margin-left: 64px;
    padding: 2px 7px 0 7px;
    display: flex;
    align-items: center;
    justify-content: space-between;
    background: #fff;
    border-radius: 2px;
    color: #8a8a8a;
    font-size: 9px;
}

.search svg {
    width: 11px;
    height: 11px;
}

.tag {
    width: 16px;
    height: 16px;
    margin-left: 7px;
}

.user {
    margin-left: auto;
    display: flex;
    flex-direction: column;
    align-items: flex-end;
}

.user-name {
    font-size: 7.2px;
    line-height: 9px;
    color: #b6d0de;
    margin-right: 12px;
}

.space {
    display: flex;
    align-items: center;
    gap: 3px;
    font-size: 10.6px;
    line-height: 14px;
    font-weight: 500;
}

.avatar {
    position: relative;
    width: 17px;
    height: 17px;
    margin-left: 7px;
    border-radius: 50%;
    background: #a62bab;
    font-size: 7px;
    line-height: 17px;
    text-align: center;
}

.avatar em {
    position: absolute;
    right: -6px;
    top: -1px;
    width: 9px;
    height: 9px;
    border-radius: 50%;
    border: 3px solid #a9b1b6;
    background: #fff;
}

.top-actions {
    display: flex;
    gap: 14px;
    margin: 0 7px 0 13px;
}

.top-actions svg {
    width: 15.5px;
    height: 15.5px;
}

.tooltip {
    position: absolute;
    left: 320px;
    top: 14px;
    width: 127px;
    height: 15px;
    background: #e9ebef;
    color: #555;
    font-size: 7.9px;
    line-height: 16px;
    text-align: center;
    white-space: nowrap;
}

/* tabs */
.tabs {
    position: relative;
    height: 21px;
    flex: none;
    display: flex;
    padding-left: 95px;
    background: #f3f4f5;
    border-bottom: 1px solid #e6e7e8;
    z-index: 1;
}

.tab {
    position: relative;
    width: 136.6px;
    height: 20px;
    display: flex;
    align-items: center;
    font-size: 9.4px;
    font-style: italic;
    color: #555;
    white-space: nowrap;
}

.tab-icon {
    width: 18px;
    height: 14px;
    margin-top: -2px;
    color: #c0c3c5;
}

.tab > em {
    position: absolute;
    left: 7px;
    top: 1px;
    width: 9px;
    height: 9px;
    border-radius: 50%;
    background: #9c9fa1;
    color: #fff;
    font-size: 7px;
    font-weight: bold;
    line-height: 9px;
    text-align: center;
}

.tab span {
    width: 119px;
    margin-left: -2px;
}

.tab .fade {
    -webkit-mask-image: linear-gradient(to right, #000 85%, transparent);
    mask-image: linear-gradient(to right, #000 85%, transparent);
}

.tab .short {
    width: 105px;
    margin-left: -1px;
}

.close {
    width: 10px;
    height: 10px;
    margin: -1px 0 0 1px;
}

.hover::after,
.active::after {
    content: "";
    position: absolute;
    left: 0;
    right: 1px;
    bottom: 0;
    height: 2px;
    background: #737b82;
}

.active::after {
    background: #2e88b5;
}

.active {
    font-weight: bold;
    letter-spacing: 0.3px;
    color: #222;
}

.active .tab-icon {
    color: #1c6d96;
}

.active > em {
    background: #075a82;
}

.add {
    width: 8px;
    height: 8px;
    margin: 5px 0 0 2px;
}

.collapse {
    width: 16px;
    height: 16px;
    margin: 2px 7px 0 auto;
}

.mouse {
    position: absolute;
    left: 291px;
    top: 8px;
    width: 9px;
    height: 13px;
}

/* workspace */
.workspace {
    flex: 1;
    min-height: 0;
    display: flex;
}

.side {
    position: relative;
    width: 164px;
    flex: none;
}

.side-head {
    width: 160px;
    height: 11px;
    padding: 1px 5px 0 0;
    display: flex;
    justify-content: flex-end;
    border: 1px solid #e3e3e3;
    border-width: 1px 0;
    background: #f8f8f8;
}

.tree-wrap {
    display: flex;
    height: 563px;
    padding-top: 11px;
}

.vscroll {
    width: 7px;
    height: 540px;
    margin-left: 2px;
    background: linear-gradient(to right, #fff 2px, #cfcfcf 2px, #cfcfcf 5px, #fff 5px);
}

.vscroll i {
    display: block;
    width: 7px;
    height: 263px;
    background: #c9c9c9;
    border: 1px solid #a9a9a9;
}

.tree {
    width: 151px;
    height: 556px;
    margin: 1px 0 0;
    padding: 0 0 0 10px;
    overflow: hidden;
    list-style: none;
    background: linear-gradient(#ccc, #ccc) 14px 20px / 1px 530px no-repeat;
}

.tree li {
    height: 25.19px;
    display: flex;
    align-items: center;
    font-family: "Noto Sans", sans-serif;
    font-size: 14px;
    letter-spacing: -0.75px;
    color: #111;
    white-space: nowrap;
}

.tree li i {
    position: relative;
    width: 9px;
    height: 9px;
    margin-right: 6px;
    border: 1px solid #aaa;
    border-radius: 2px;
    background: linear-gradient(#222, #222) center / 5px 1px no-repeat, linear-gradient(#222, #222) center / 1px 5px no-repeat, #f1f1f1;
}

.tree li i::after {
    content: "";
    position: absolute;
    left: 8px;
    top: 3px;
    width: 6px;
    height: 1px;
    background: #bbb;
}

.tree li svg {
    width: 14px;
    height: 14px;
    margin-top: -1px;
}

.tree li span {
    margin-left: 14.5px;
    flex: 1;
    overflow: hidden;
}

.tree .root .root-icon {
    margin: -4px 0 0 -3px;
}

.tree .root span {
    height: 18px;
    margin-left: 15px;
    line-height: 18px;
    letter-spacing: -0.45px;
    background: #0c63ea;
    color: #fff;
}

.hscroll {
    position: relative;
    width: 127px;
    height: 4px;
    margin: 2px 0 0 22px;
    background: #cfcfcf;
}

.hscroll i {
    display: block;
    width: 37px;
    height: 7px;
    margin-top: -2px;
    position: absolute;
    background: #c4c4c4;
    border: 1px solid #999;
}

.grip {
    position: absolute;
    left: 160px;
    width: 4px;
    height: 20px;
    border: 1px solid #999;
    border-width: 0 1px;
}

.grip.top {
    top: 0;
}

.grip.bottom {
    bottom: 45px;
}

.stamp {
    width: 40px;
    height: 39px;
    margin: 3px 0 0 8px;
}

/* 3D view */
.canvas {
    position: relative;
    flex: 1;
    display: flex;
    flex-direction: column;
    align-items: flex-start;
}

.model {
    width: 330px;
    height: 230px;
    margin: 175px 0 0 306px;
}

.preview {
    position: absolute;
    left: 0;
    top: 4px;
    width: 259px;
    height: 95px;
    border: 1px solid #c6c6c6;
    border-width: 0 1px;
    background: #fff;
}

.preview-title {
    height: 14px;
    padding-left: 1px;
    background: #cacaca;
    font-size: 9px;
    line-height: 17px;
    color: #333;
}

.preview svg {
    width: 256px;
    height: 80px;
}

.triad {
    position: absolute;
    left: 1033px;
    top: 496px;
    width: 74px;
    height: 68px;
}

.triad text {
    font: bold 7px "Open Sans", sans-serif;
    fill: #666;
}

.pointer {
    position: absolute;
    left: 1105px;
    top: 571px;
    width: 10px;
    height: 12px;
}

/* action bar */
.actionbar {
    margin: auto 0 0 103px;
}

.sections {
    display: flex;
    width: 280px;
    height: 14px;
    margin-left: 240px;
    font-size: 7.8px;
    line-height: 15px;
    background: #cfd1d2;
}

.sections span {
    flex: 1 1 auto;
    text-align: center;
    border-right: 1px solid #b4b6b7;
    white-space: nowrap;
}

.sections .on {
    background: #f2f2f2;
}

.sections .first {
    background: linear-gradient(135deg, #2e7fae 3px, #f2f2f2 3px);
}

.tools {
    display: flex;
    align-items: center;
    width: 746px;
    height: 29px;
    background: #f1f1f1;
    border: 1px solid #cfcfcf;
    border-radius: 2px 2px 0 0;
}

.tools > * {
    flex: none;
}

.handle {
    width: 13px;
    height: 28px;
    padding: 4px 0 0 2px;
    margin-right: 1.5px;
    border-right: 1px solid #ccc;
}

.tool {
    width: 25.5px;
    height: 26px;
    display: flex;
    align-items: center;
    justify-content: center;
}

.tool svg {
    width: 20px;
    height: 20px;
}

.boxed {
    border: 1px solid #7fb0cb;
    background: #f7fafb;
    height: 24px;
}

.view-cube {
    margin-left: 1px;
}

.caret {
    width: 9.5px;
    height: 24px;
    display: flex;
    align-items: center;
    justify-content: center;
}

.caret::before {
    content: "";
    border: 2.5px solid transparent;
    border-top: 3px solid #888;
    border-bottom: 0;
}

.boxed-caret {
    width: 8.5px;
    border: 1px solid #d3d3d3;
    border-left: 0;
    background: #fafafa;
}

.sep {
    width: 1px;
    height: 26px;
    margin: 0 1px;
    background: #c5c5c5;
}

.sep.wide {
    margin: 0 2px;
}

.play {
    width: 6px;
    height: 8px;
    margin: 0 4px 0 5px;
}

/* taskbar */
.taskbar {
    height: 27px;
    flex: none;
    display: flex;
    background: linear-gradient(to right, #211e1d, #1e1c1c 30%, #231e1c 45%, #352a23 55%, #30271f 80%, #1e1b1c 90%, #261b1c);
    color: #fff;
}

.sys {
    width: 32px;
    display: flex;
    align-items: center;
    justify-content: center;
}

.task {
    position: relative;
    width: 32.65px;
    display: flex;
    align-items: center;
    justify-content: center;
}

.sys + .task {
    margin-left: 2px;
}

.sys svg,
.task svg {
    width: 16px;
    height: 16px;
    margin-top: -1px;
}

.office {
    font: bold 6.5px "Open Sans", sans-serif;
    fill: #fff;
}

.run::after {
    content: "";
    position: absolute;
    left: 3px;
    right: 3px;
    bottom: 0;
    height: 2px;
    background: #a274ac;
}

.current {
    background: #4e4744;
}

.current::after {
    left: 0;
    right: 0;
}

.tray {
    margin-left: auto;
    padding-right: 2px;
    display: flex;
    align-items: center;
    gap: 4px;
    border-right: 1px solid #666;
    margin-right: 2px;
}

.tray svg {
    width: 12px;
    height: 12px;
}

.tray .keyboard {
    width: 16px;
}

.clock {
    width: 42px;
    margin-left: 1px;
    display: flex;
    flex-direction: column;
    align-items: center;
    font-size: 7.8px;
    line-height: 12px;
    letter-spacing: -0.1px;
}

.notice {
    position: relative;
    width: 22px;
    margin-left: 5px;
}

.notice em {
    position: absolute;
    left: 4px;
    top: 2px;
    width: 12px;
    height: 12px;
    border: 1px solid #888;
    border-radius: 50%;
    background: #2d2525;
    font-size: 7px;
    line-height: 10px;
    text-align: center;
}
```
